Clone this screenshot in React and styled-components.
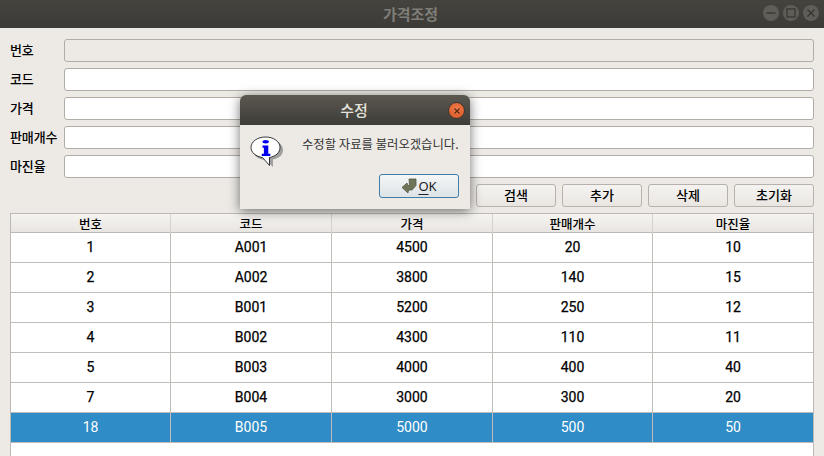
import React from 'react'
import styled, { createGlobalStyle } from 'styled-components'

const GlobalStyle = createGlobalStyle`
  html, body {
    margin: 0;
    height: 100%;
    overflow: hidden;
    background: #edeae6;
  }
  body {
    font-family: "Noto Sans CJK KR", "Noto Sans", sans-serif;
  }
`

const Window = styled.div`
  position: relative;
  width: 824px;
  height: 456px;
  overflow: hidden;
  display: flex;
  flex-direction: column;
  background: #edeae6;
`

const TitleBar = styled.div`
  flex: none;
  height: 28px;
  display: flex;
  align-items: center;
  justify-content: center;
  position: relative;
  background: linear-gradient(#45433e, #3c3b37);
  color: #7f7d78;
  font-size: 15px;
  font-weight: 700;
`

const TitleText = styled.span`
  margin-right: 3px;
  margin-bottom: 2px;
`

const WindowControls = styled.div`
  position: absolute;
  right: 5px;
  top: 5px;
  display: flex;
  gap: 4px;
`

const WindowControl = styled.div`
  width: 16px;
  height: 16px;
  border-radius: 50%;
  background: #5f5d58;
  display: flex;
  align-items: center;
  justify-content: center;
`

const Content = styled.div`
  flex: 1;
  min-height: 0;
  display: flex;
  flex-direction: column;
  padding: 11px 10px 0;
`

const Form = styled.div`
  display: flex;
  flex-direction: column;
  gap: 6px;
`

const FormRow = styled.div`
  display: flex;
  align-items: center;
  height: 23px;
`

const Label = styled.label`
  width: 54px;
  flex: none;
  padding-bottom: 2px;
  font-size: 13px;
  font-weight: 500;
  color: #000;
  white-space: nowrap;
  letter-spacing: -0.1px;
`

const Field = styled.div`
  flex: 1;
  height: 23px;
  box-sizing: border-box;
  border: 1px solid #b1aca5;
  border-radius: 3px;
  background: ${p => (p.$disabled ? '#edeae6' : '#fff')};
`

const ButtonRow = styled.div`
  display: flex;
  justify-content: flex-end;
  gap: 6px;
  margin-top: 6px;
`

const Button = styled.div`
  width: 80px;
  height: 23px;
  box-sizing: border-box;
  border: 1px solid #b6b1aa;
  border-radius: 3px;
  padding-bottom: 2px;
  background: linear-gradient(#f5f3f1, #e9e6e2);
  display: flex;
  align-items: center;
  justify-content: center;
  font-size: 13px;
  font-weight: 500;
  color: #000;
`

const Table = styled.div`
  margin-top: 6px;
  flex: 1;
  box-sizing: border-box;
  border: 1px solid #bdb9b4;
  border-bottom: none;
  background: #fff;
`

const HeaderRow = styled.div`
  display: grid;
  grid-template-columns: 160px 161px 161px 160px 160px;
  height: 19px;
  box-sizing: border-box;
  border-bottom: 1px solid #bdb9b4;
  background: linear-gradient(#f6f4f2, #e8e5e1);
`

const HeaderCell = styled.div`
  display: flex;
  align-items: center;
  justify-content: center;
  padding-bottom: 1px;
  font-size: 12.5px;
  font-weight: 500;
  color: #000;
  border-right: 1px solid #d5d1cc;
  &:last-child { border-right: none; }
`

const Row = styled.div`
  display: grid;
  grid-template-columns: 160px 161px 161px 160px 160px;
  height: 30px;
  box-sizing: border-box;
  border-bottom: 1px solid #c0bcb8;
  background: ${p => (p.$selected ? '#308cc6' : '#fff')};
  color: ${p => (p.$selected ? '#fff' : '#000')};
`

const Cell = styled.div`
  display: flex;
  align-items: center;
  justify-content: center;
  padding-bottom: 2px;
  font-family: Roboto, "Noto Sans", sans-serif;
  font-size: 14px;
  font-weight: 400;
  -webkit-text-stroke: ${p => (p.$selected ? '0' : '0.25px')};
  border-right: 1px solid #c0bcb8;
  &:last-child { border-right: none; }
`

const Dialog = styled.div`
  position: absolute;
  left: 240px;
  top: 95px;
  width: 230px;
  height: 114px;
  border-radius: 6px 6px 0 0;
  background: #edeae6;
  box-shadow: 0 2px 12px rgba(0, 0, 0, 0.55);
  display: flex;
  flex-direction: column;
`

const DialogTitle = styled.div`
  position: relative;
  flex: none;
  height: 30px;
  border-radius: 6px 6px 0 0;
  background: linear-gradient(#5b5850, #3d3c37);
  color: #e4e2dd;
  font-size: 15px;
  font-weight: 500;
  display: flex;
  align-items: center;
  justify-content: center;
`

const DialogTitleText = styled.span`
  margin-right: 2px;
  margin-bottom: 2px;
`

const DialogClose = styled.div`
  position: absolute;
  right: 5px;
  top: 7px;
  width: 17px;
  height: 17px;
  border-radius: 50%;
  background: radial-gradient(circle at 50% 40%, #f08050, #d9501e);
  border: 1px solid #3a3833;
  box-sizing: border-box;
  display: flex;
  align-items: center;
  justify-content: center;
`

const DialogBody = styled.div`
  flex: 1;
  display: flex;
  padding: 8px 11px 0 10px;
`

const DialogIcon = styled.svg`
  flex: none;
  width: 34px;
  height: 36px;
`

const DialogText = styled.div`
  margin-left: 18px;
  margin-top: 2px;
  font-size: 12.35px;
  color: #333;
  white-space: nowrap;
`

const DialogFooter = styled.div`
  display: flex;
  justify-content: flex-end;
  padding: 0 11px 11px;
`

const OkButton = styled.div`
  width: 80px;
  height: 24px;
  box-sizing: border-box;
  border: 1px solid #3d7fa8;
  border-radius: 3px;
  background: linear-gradient(#f4f6f7, #dde3e6);
  display: flex;
  align-items: center;
  justify-content: center;
  font-family: "Noto Sans", sans-serif;
  font-size: 13px;
  color: #222;
`

const OkLabel = styled.span`
  margin-left: 1px;
`

const Mnemonic = styled.span`
  text-decoration: underline;
  text-underline-offset: 3px;
`

const columns = ['번호', '코드', '가격', '판매개수', '마진율']

const rows = [
  [1, 'A001', 4500, 20, 10],
  [2, 'A002', 3800, 140, 15],
  [3, 'B001', 5200, 250, 12],
  [4, 'B002', 4300, 110, 11],
  [5, 'B003', 4000, 400, 40],
  [7, 'B004', 3000, 300, 20],
  [18, 'B005', 5000, 500, 50]
]

const App = () => (
  <>
    <GlobalStyle />
    <Window>
      <TitleBar>
        <TitleText>가격조정</TitleText>
        <WindowControls>
          <WindowControl>
            <svg width='12' height='12' viewBox='0 0 12 12'><path d='M1.5 6h9' stroke='#35342f' strokeWidth='1.3' /></svg>
          </WindowControl>
          <WindowControl>
            <svg width='10' height='10' viewBox='0 0 10 10'><rect x='1' y='1' width='8' height='8' fill='none' stroke='#35342f' strokeWidth='1.2' /></svg>
          </WindowControl>
          <WindowControl>
            <svg width='10' height='10' viewBox='0 0 10 10'><path d='M1.5 1.5l7 7M8.500 1.500l-7 7' stroke='#35342f' strokeWidth='1.2' /></svg>
          </WindowControl>
        </WindowControls>
      </TitleBar>
      <Content>
        <Form>
          <FormRow><Label>번호</Label><Field $disabled /></FormRow>
          <FormRow><Label>코드</Label><Field /></FormRow>
          <FormRow><Label>가격</Label><Field /></FormRow>
          <FormRow><Label>판매개수</Label><Field /></FormRow>
          <FormRow><Label>마진율</Label><Field /></FormRow>
        </Form>
        <ButtonRow>
          <Button>검색</Button>
          <Button>추가</Button>
          <Button>삭제</Button>
          <Button>초기화</Button>
        </ButtonRow>
        <Table>
          <HeaderRow>
            {columns.map(c => <HeaderCell key={c}>{c}</HeaderCell>)}
          </HeaderRow>
          {rows.map((r, i) => (
            <Row key={r[0]} $selected={i === rows.length - 1}>
              {r.map((v, j) => <Cell key={j} $selected={i === rows.length - 1}>{v}</Cell>)}
            </Row>
          ))}
        </Table>
      </Content>
      <Dialog>
        <DialogTitle>
          <DialogTitleText>수정</DialogTitleText>
          <DialogClose>
            <svg width='8' height='8' viewBox='0 0 8 8'><path d='M1.500 1.500l5 5M6.500 1.500l-5 5' stroke='#5a2a10' strokeWidth='1.2' /></svg>
          </DialogClose>
        </DialogTitle>
        <DialogBody>
          <DialogIcon viewBox='0 0 34 36'>
            <path d='M18 6c8 0 15 4.500 15 11 0 5-4 8.500-10 9.500V34l-7-7C8 26.500 3 22.500 3 17 3 10.500 10 6 18 6z' fill='#a0a0a0' />
            <path d='M15.500 4C23.500 4 30 8.500 30 14.500c0 5.200-4.500 9-10.500 10V32.500l-7-8C6 23.500 1 19.700 1 14.500 1 8.500 7.500 4 15.500 4z' fill='#fff' stroke='#222' strokeWidth='0.9' />
            <ellipse cx='15.700' cy='8.700' rx='3.200' ry='1.700' fill='#0000ee' />
            <path d='M12.500 12.500h5.800v8.300h2v2.200h-8.500v-2.200h2.100v-6h-1.400z' fill='#0000ee' />
          </DialogIcon>
          <DialogText>수정할 자료를 불러오겠습니다.</DialogText>
        </DialogBody>
        <DialogFooter>
          <OkButton>
            <svg width='16' height='16' viewBox='0 0 16 16'>
              <path d='M8 1h7v6.500L11 12H7.500L7 15 1 9.500 6 5l1 2.500h1.500z' fill='#6f7458' stroke='#55583f' strokeWidth='0.8' strokeLinejoin='round' />
            </svg>
            <OkLabel><Mnemonic>O</Mnemonic>K</OkLabel>
          </OkButton>
        </DialogFooter>
      </Dialog>
    </Window>
  </>
)

export default App
